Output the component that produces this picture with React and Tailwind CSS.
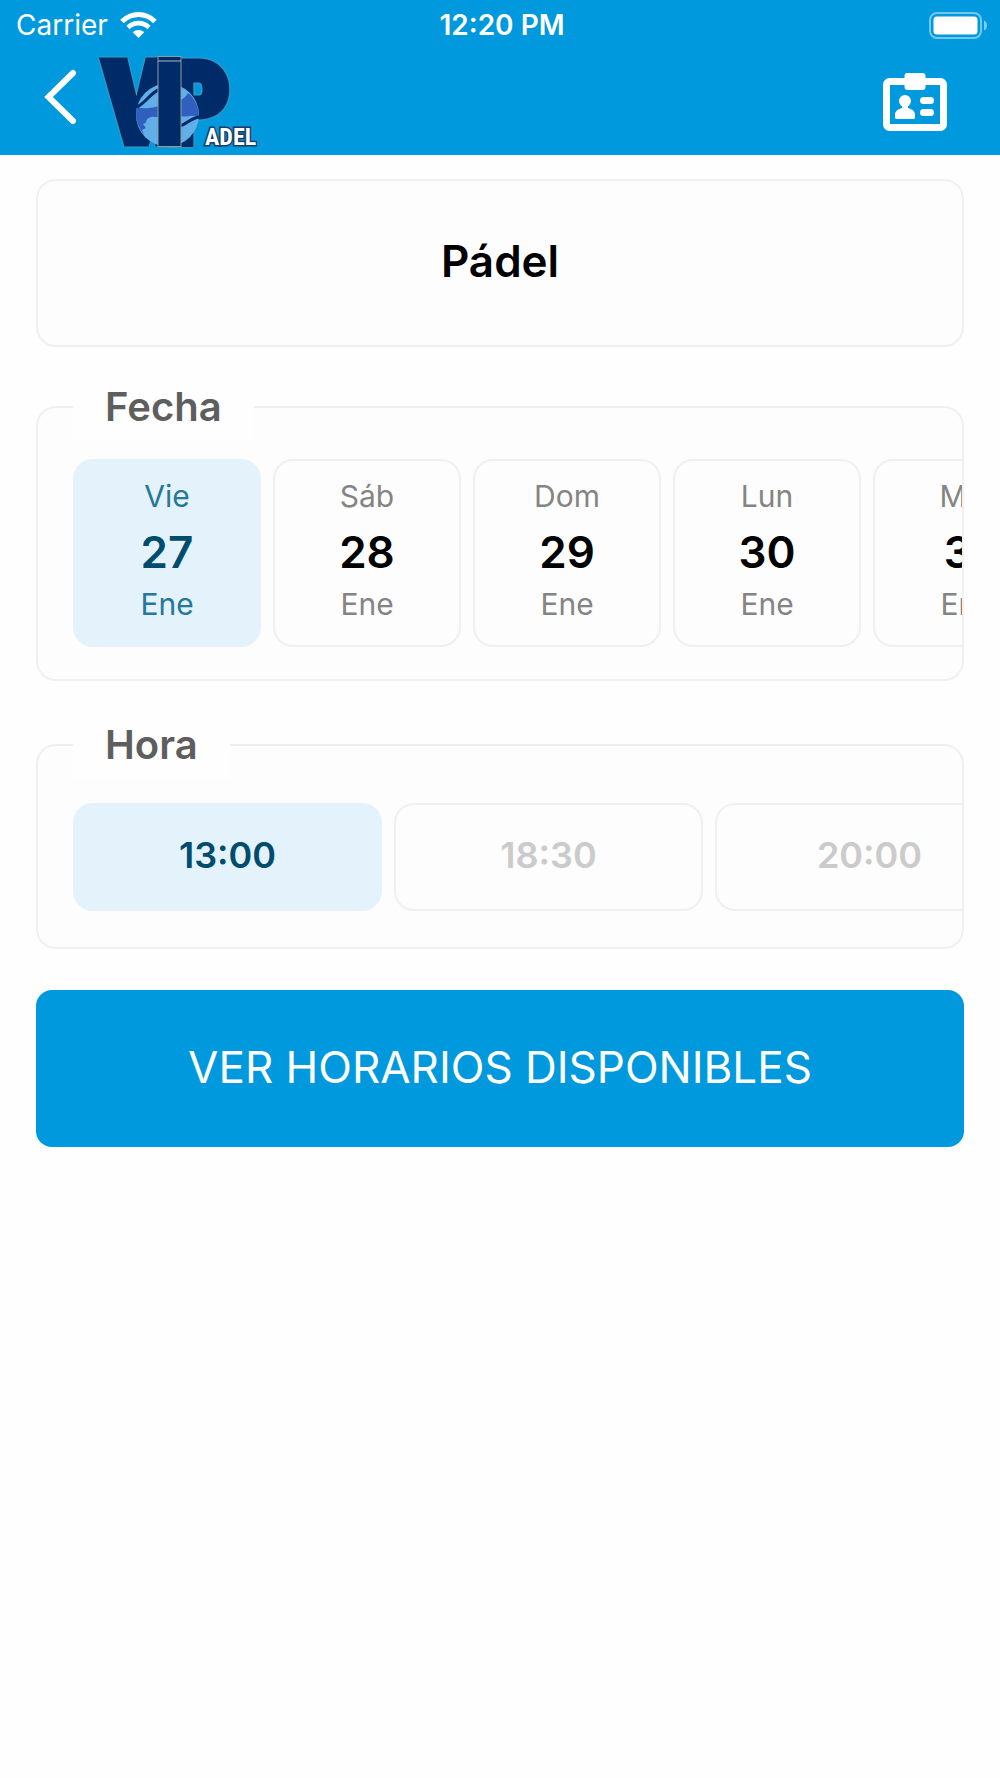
import React, { useState } from 'react'
import clsx from 'clsx'

const days = [
  { id: 27, weekday: 'Vie', month: 'Ene' },
  { id: 28, weekday: 'Sáb', month: 'Ene' },
  { id: 29, weekday: 'Dom', month: 'Ene' },
  { id: 30, weekday: 'Lun', month: 'Ene' },
  { id: 31, weekday: 'Mar', month: 'Ene' },
]

const hours = ['13:00', '18:30', '20:00']

function WifiIcon() {
  return (
    <svg width="37" height="28" viewBox="0 0 37 28" fill="none" aria-hidden="true">
      <path d="M2 10.5C11.5 1.2 25.500 1.200 35 10.500" stroke="white" strokeWidth="5" />
      <path d="M8 16.500C14 10.700 23 10.700 29 16.500" stroke="white" strokeWidth="4.600" />
      <path d="M12.800 21.300C16 18.200 21 18.200 24.200 21.300L18.500 27Z" fill="white" />
    </svg>
  )
}

function BatteryIcon() {
  return (
    <svg width="59" height="27" viewBox="0 0 59 27" fill="none" aria-hidden="true">
      <rect x="1" y="1" width="51" height="25" rx="7" stroke="white" strokeOpacity="0.45" strokeWidth="2" />
      <rect x="4.500" y="4.500" width="44" height="18" rx="3.500" fill="white" />
      <path d="M55 8.500C59 10 59 17 55 18.500Z" fill="white" fillOpacity="0.5" />
    </svg>
  )
}

function BadgeIcon() {
  return (
    <svg width="64" height="60" viewBox="0 0 64 60" fill="none" aria-hidden="true">
      <rect x="3.500" y="8.500" width="57" height="46" rx="3" stroke="white" strokeWidth="7" />
      <rect x="21.500" y="0" width="21" height="17" rx="3" fill="white" />
      <circle cx="22" cy="28" r="6" fill="white" />
      <path d="M19 32H25V35C29.500 36.500 32 38 32 42V43.500C32 45.500 31.500 46 30 46H14C12.500 46 12 45.500 12 43.500V42C12 38 14.500 36.500 19 35Z" fill="white" />
      <rect x="37" y="24" width="14" height="7" rx="3.500" fill="white" />
      <rect x="37" y="36" width="14" height="7" rx="3.500" fill="white" />
    </svg>
  )
}

function Logo() {
  return (
    <svg
      width="162"
      height="98"
      viewBox="0 0 162 98"
      role="img"
      aria-label="VIP Padel"
      className="overflow-visible font-['Liberation_Sans_Narrow','Roboto_Condensed','Liberation_Sans',sans-serif] font-bold"
    >
      <g className="[filter:drop-shadow(0_0_1px_#8a9f9a)]">
        <text x="9 58 70" y="89" fontSize="109" fill="#002b69" stroke="#002b69" strokeWidth="11">VIP</text>
      </g>
      {/* Ball, with the bar of the I over it */}
      <circle cx="71.500" cy="63" r="31.500" fill="#62aee8" />
      <path d="M41 55C50 58 59 55 71 52C82 50 88 48 92 41C98 45 103 55 103 65C95 62 91 66 84 64C78 61 73 67 68 64C61 67 58 63 53 66C49 67 52 71 47 72L50 76L46 78L48 82C43 78 38 66 41 55Z" fill="#315fbd" />
      <path d="M41 55C51 50 54 41 64 37" fill="none" stroke="#002b69" strokeWidth="3" />
      <path d="M84 74C91 72 95 66 103 65" fill="none" stroke="#002b69" strokeWidth="3" />
      <rect x="62" y="4.500" width="23" height="90" fill="#002b69" stroke="#8a9f9a" strokeWidth="1" />
      <path d="M62 9H85" stroke="#a9b8cb" strokeWidth="1" />
      <text
        x="109"
        y="93"
        fontSize="24"
        fill="white"
        stroke="#1b3d63"
        strokeWidth="3"
        className="[paint-order:stroke]"
      >
        ADEL
      </text>
    </svg>
  )
}

function Header() {
  return (
    <header className="bg-[#0099dd] text-white">
      <div className="grid h-[50px] grid-cols-3 items-center pl-4 pr-3 text-[28px] leading-8">
        <div className="flex items-center gap-3">
          <span>Carrier</span>
          <WifiIcon />
        </div>
        <time className="text-center font-semibold">12:20 PM</time>
        <div className="flex justify-end">
          <BatteryIcon />
        </div>
      </div>
      <nav className="flex h-[105px] items-center pl-[44px] pr-[53px]">
        <button type="button" aria-label="Volver" className="mb-3 mr-4">
          <svg width="36" height="56" viewBox="0 0 36 56" fill="none" aria-hidden="true">
            <path d="M29 4L4.500 28L29 52" stroke="white" strokeWidth="6" strokeLinecap="round" />
          </svg>
        </button>
        <a href="#inicio" className="mb-1">
          <Logo />
        </a>
        <button type="button" aria-label="Credencial" className="ml-auto">
          <BadgeIcon />
        </button>
      </nav>
    </header>
  )
}

function Section({ title, className, children }) {
  return (
    <fieldset className="min-w-0 rounded-[20px] border-2 border-[#f0f0f0] bg-[#fdfdfd] pl-[35px]">
      <legend className="bg-[#fefefe] px-8 text-[40px] font-semibold leading-[68px] text-[#5e5e5e]">
        {title}
      </legend>
      <div className={clsx('flex gap-3 overflow-hidden', className)}>{children}</div>
    </fieldset>
  )
}

function DayButton({ day, selected, onSelect }) {
  return (
    <button
      type="button"
      aria-pressed={selected}
      onClick={() => onSelect(day.id)}
      className={clsx(
        'flex h-[188px] w-[188px] shrink-0 flex-col items-center rounded-[20px] border-2 pt-[15px] text-[30px] leading-10',
        selected ? 'border-[#e4f3fb] bg-[#e4f3fb] text-[#267799]' : 'border-[#f0f0f0] text-[#848484]'
      )}
    >
      <span>{day.weekday}</span>
      <span className={clsx('pt-1 text-[44px] font-semibold leading-[64px]', selected ? 'text-[#004c6d]' : 'text-black')}>
        {day.id}
      </span>
      <span>{day.month}</span>
    </button>
  )
}

function HourButton({ hour, selected, onSelect }) {
  return (
    <button
      type="button"
      aria-pressed={selected}
      onClick={() => onSelect(hour)}
      className={clsx(
        'h-[108px] w-[309px] shrink-0 rounded-[20px] border-2 pb-1 text-[36px] font-semibold',
        selected ? 'border-[#e4f3fb] bg-[#e4f3fb] text-[#004c6d]' : 'border-[#f0f0f0] text-[#cbcbcb]'
      )}
    >
      {hour}
    </button>
  )
}

function App() {
  const [selectedDay, setSelectedDay] = useState(27)
  const [selectedHour, setSelectedHour] = useState('13:00')

  return (
    <div className="min-h-screen bg-[#fefefe] font-[Inter,sans-serif]">
      <Header />
      <main className="flex flex-col px-9 pt-6">
        <h1 className="mb-[26px] rounded-[20px] border-2 border-[#f0f0f0] bg-[#fdfdfd] pb-[52px] pt-12 text-center text-[44px] font-semibold leading-[64px] text-black">
          Pádel
        </h1>

        <Section title="Fecha" className="pb-8 pt-[18px]">
          {days.map((day) => (
            <DayButton key={day.id} day={day} selected={day.id === selectedDay} onSelect={setSelectedDay} />
          ))}
        </Section>

        <div className="mt-[30px]">
          <Section title="Hora" className="pb-9 pt-6">
            {hours.map((hour) => (
              <HourButton key={hour} hour={hour} selected={hour === selectedHour} onSelect={setSelectedHour} />
            ))}
          </Section>
        </div>

        <button type="button" className="mt-[41px] h-[157px] rounded-2xl bg-[#0099dd] pb-1 text-[44px] text-white">
          VER HORARIOS DISPONIBLES
        </button>
      </main>
    </div>
  )
}

export default App
